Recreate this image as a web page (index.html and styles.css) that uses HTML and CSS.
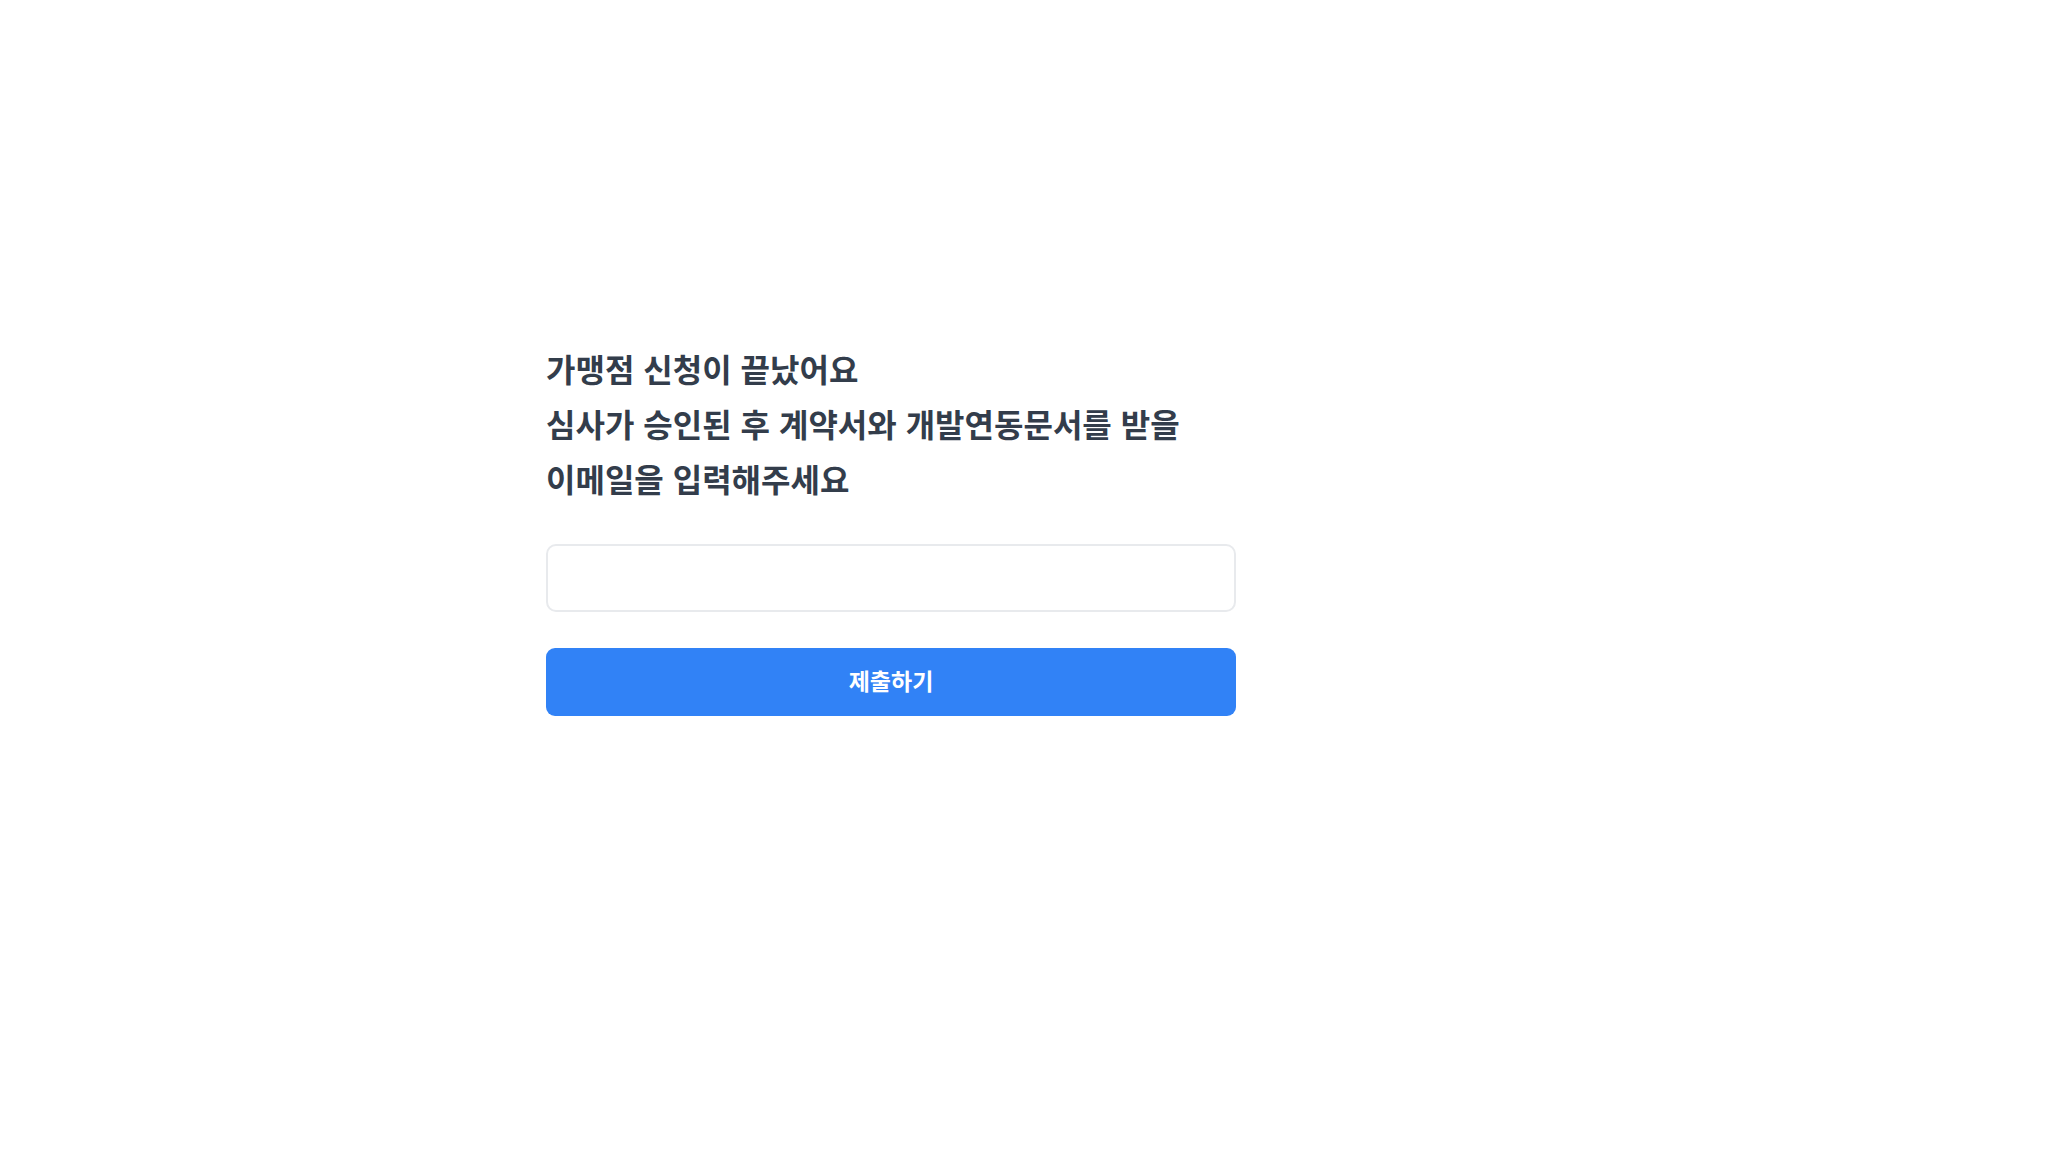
FILE: index.html
```html
<!DOCTYPE html>
<html lang="ko">
<head>
    <meta charset="UTF-8">
    <meta name="viewport" content="width=device-width, initial-scale=1.0">
    <title>가맹점 신청 완료</title>
    <link rel="stylesheet" href="styles.css">
</head>
<body>
    <div class="container">
        <h1 class="title">
            가맹점 신청이 끝났어요<br>
            심사가 승인된 후 계약서와 개발연동문서를 받을<br>
            이메일을 입력해주세요
        </h1>
        <form class="email-form">
            <input type="email" class="email-input" aria-label="이메일">
            <button type="button" class="submit-btn">제출하기</button>
        </form>
    </div>
</body>
</html>
```

FILE: styles.css
```css
body{
    margin: 0;
    background-color: #ffffff;
    font-family: "Noto Sans CJK KR", "Noto Sans", sans-serif;
}

.container{
    width: 690px;
    margin-left: 546px;
    padding-top: 341px;
}

.title{
    margin: 0;
    font-size: 32px;
    line-height: 55px;
    font-weight: 700;
    color: #333d4b;
}

.email-form{
    display: flex;
    flex-direction: column;
    gap: 36px;
    margin-top: 38px;
}

.email-input{
    box-sizing: border-box;
    height: 68px;
    width: 100%;
    padding: 0 18px;
    font-size: 20px;
    font-family: inherit;
    border: 2px solid #e8eaed;
    border-radius: 10px;
    outline: none;
}

.submit-btn{
    height: 68px;
    width: 100%;
    padding: 0 0 4px;
    font-size: 23px;
    font-weight: 700;
    font-family: inherit;
    color: #ffffff;
    background-color: #3182f6;
    border: none;
    border-radius: 9px;
    cursor: pointer;
}
```
